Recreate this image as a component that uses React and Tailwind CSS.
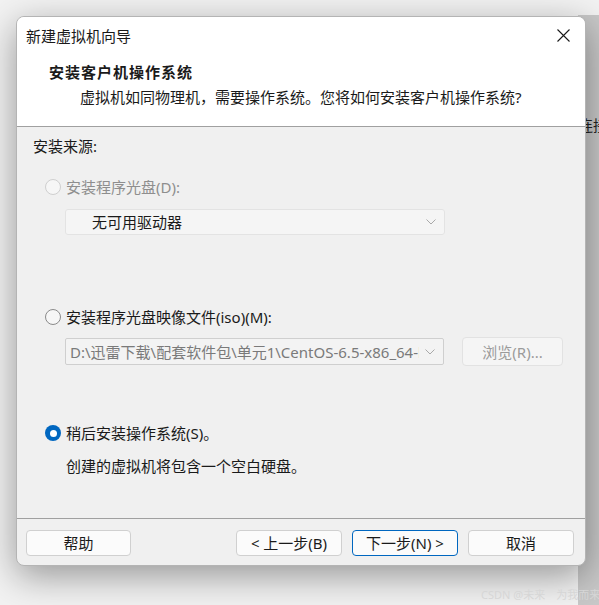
import React from 'react'

const Radio = ({ checked, disabled }) => {
  if (checked) {
    return (
      <span className="flex h-[16px] w-[16px] shrink-0 items-center justify-center rounded-full bg-[#0067c0]">
        <span className="h-[7px] w-[7px] rounded-full bg-white" />
      </span>
    )
  }
  return (
    <span
      className={
        disabled
          ? 'h-[16px] w-[16px] shrink-0 rounded-full border border-[#cfcfcf] bg-[#f6f6f6]'
          : 'h-[16px] w-[16px] shrink-0 rounded-full border border-[#8a8a8a] bg-[#f6f6f6]'
      }
    />
  )
}

const Chevron = () => (
  <svg width="10" height="6" viewBox="0 0 10 6" className="shrink-0">
    <path d="M0.5 0.5 L5 5 L9.5 0.5" fill="none" stroke="#a9a9a9" strokeWidth="1" />
  </svg>
)

export default function App() {
  return (
    <div className="relative h-[605px] w-[599px] overflow-hidden bg-[#f2f2f2] pl-[16px] pt-[16px] font-['Noto_Sans','Noto_Sans_CJK_SC',sans-serif] text-[#1a1a1a]">
      {/* ventana de fondo a la derecha */}
      <div className="absolute bottom-0 left-[578px] top-[15px] w-[30px] bg-[#c8c8c8]">
        <div className="pt-[100px] text-[15px] leading-[20px] whitespace-nowrap text-[#222]">连接</div>
      </div>

      <div className="relative z-10 flex h-[550px] w-[570px] flex-col overflow-hidden rounded-[8px] border border-[#b4b4b4] bg-[#f0f0f0] shadow-[0_10px_36px_rgba(0,0,0,0.38)]">
        {/* cabecera */}
        <div className="h-[110px] shrink-0 border-b border-[#a0a0a0] bg-white">
          <div className="flex h-[37px] items-center justify-between pl-[9px] pr-[15px]">
            <span className="text-[15px] leading-[20px]">新建虚拟机向导</span>
            <svg width="13" height="13" viewBox="0 0 13 13">
              <path d="M0.5 0.5 L12.5 12.5 M12.5 0.5 L0.5 12.5" stroke="#1a1a1a" strokeWidth="1.1" />
            </svg>
          </div>
          <div className="mt-[8px] pl-[32px] text-[15px] font-bold leading-[20px] tracking-[1px]">安装客户机操作系统</div>
          <div className="mt-[5px] pl-[63px] text-[15px] leading-[20px]">
            虚拟机如同物理机，需要操作系统。您将如何安装客户机操作系统?
          </div>
        </div>

        {/* cuerpo */}
        <div className="flex-1 pl-[16px] pt-[9px] text-[15px] leading-[20px]">
          <div>安装来源:</div>

          <div className="mt-[21px] flex items-center gap-[5px] pl-[12px] text-[#8e8e8e]">
            <Radio disabled />
            <span>安装程序光盘(D):</span>
          </div>
          <div className="ml-[32px] mt-[12px] flex h-[26px] w-[380px] items-center justify-between rounded-[3px] border border-[#e3e3e3] bg-[#f5f5f5] pl-[26px] pr-[8px]">
            <span>无可用驱动器</span>
            <Chevron />
          </div>

          <div className="mt-[72px] flex items-center gap-[5px] pl-[12px]">
            <Radio />
            <span>安装程序光盘映像文件(iso)(M):</span>
          </div>
          <div className="ml-[32px] mt-[10px] flex items-start gap-[18px]">
            <div className="mt-[1px] flex h-[27px] w-[379px] items-center gap-[6px] rounded-[2px] border border-[#cfcfcf] bg-[#f3f3f3] pl-[4px] pr-[8px]">
              <span className="flex-1 overflow-hidden whitespace-nowrap text-[#7a7a7a]">
                D:\迅雷下载\配套软件包\单元1\CentOS-6.5-x86_64-bin-DVD1.iso
              </span>
              <Chevron />
            </div>
            <div className="flex h-[29px] w-[101px] items-center justify-center rounded-[4px] border border-[#e2e2e2] bg-[#f5f5f5] text-[#9b9b9b]">
              浏览(R)...
            </div>
          </div>

          <div className="mt-[57px] flex items-center gap-[5px] pl-[12px]">
            <Radio checked />
            <span>稍后安装操作系统(S)。</span>
          </div>
          <div className="mt-[13px] pl-[33px]">创建的虚拟机将包含一个空白硬盘。</div>
        </div>

        {/* botones */}
        <div className="flex h-[47px] shrink-0 border-t border-[#a0a0a0] pl-[9px] pr-[11px] pt-[11px] text-[15px] leading-[20px]">
          <button className="flex h-[26px] w-[105px] items-center justify-center rounded-[4px] border border-[#d0d0d0] bg-[#fbfbfb]">帮助</button>
          <div className="ml-auto flex gap-[10px]">
            <button className="flex h-[26px] w-[106px] items-center justify-center rounded-[4px] border border-[#d0d0d0] bg-[#fbfbfb]">&lt; 上一步(B)</button>
            <button className="flex h-[26px] w-[106px] items-center justify-center rounded-[4px] border border-[#0067c0] bg-[#fbfbfb]">下一步(N) &gt;</button>
            <button className="flex h-[26px] w-[106px] items-center justify-center rounded-[4px] border border-[#d0d0d0] bg-[#fbfbfb]">取消</button>
          </div>
        </div>
      </div>

      <div className="absolute left-[481px] top-[588px] z-20 whitespace-nowrap text-[11px] leading-[14px] text-[#d6d6d6]">CSDN @未来　为我而来</div>
    </div>
  )
}
